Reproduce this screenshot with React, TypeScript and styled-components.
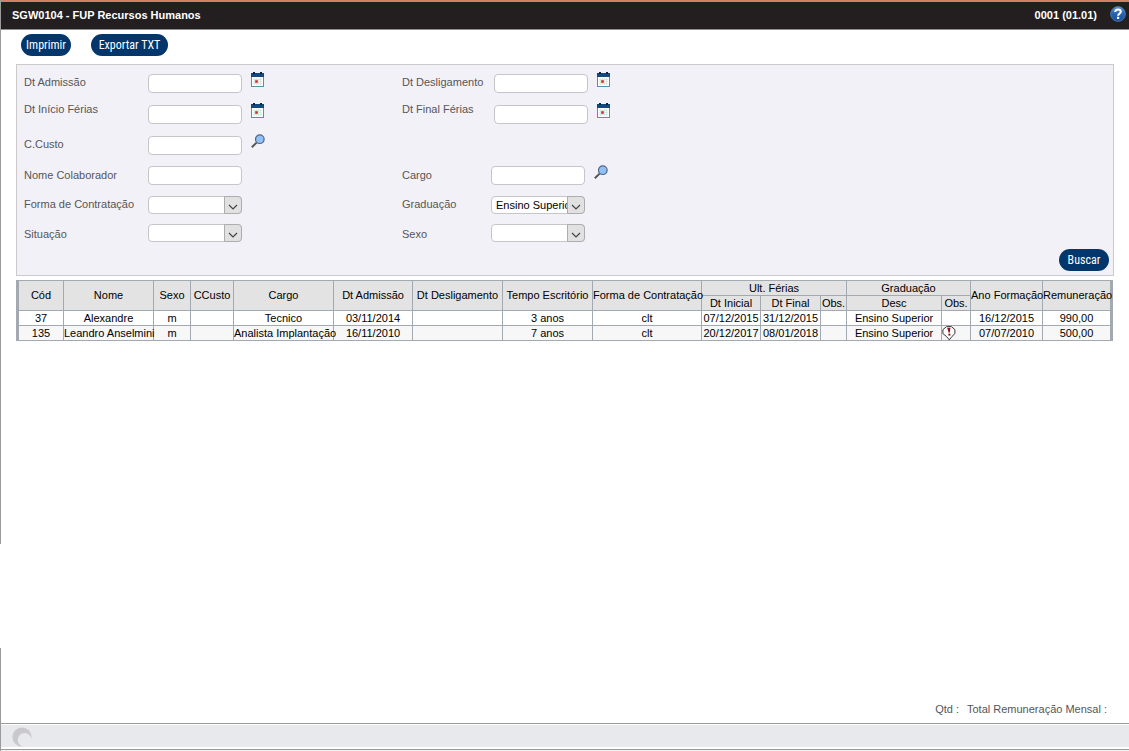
import React from 'react';
import styled, { createGlobalStyle } from 'styled-components';

const GlobalStyle = createGlobalStyle`
  *, *::before, *::after { box-sizing: border-box; }
  body {
    margin: 0;
    background: #ffffff;
    color: #565656;
    font: 11px/14px "Liberation Sans", Arial, sans-serif;
  }
`;

const edge = '#9b9b9b';
const gridLine = '#a3a9b0';
const navy = '#03366b';

const Page = styled.div`
  display: flex;
  flex-direction: column;
  min-height: 100vh;
`;

const Upper = styled.div`
  flex: 1 0 auto;
  border-left: 1px solid ${edge};
`;

const Break = styled.div`
  flex: none;
  height: 104px;
`;

const Lower = styled.div`
  flex: none;
  border-left: 1px solid ${edge};
`;

const TitleBar = styled.header`
  display: flex;
  align-items: center;
  height: 30px;
  padding: 0 3px 2px 11px;
  border-top: 2px solid #d67f62;
  border-bottom: 1px solid #8f8d8e;
  background: #231f20;
  color: #ffffff;
  font-weight: bold;
`;

const Title = styled.h1`
  flex: 1;
  margin: 0;
  font-size: 11px;
`;

const HelpButton = styled.button`
  display: flex;
  margin: 0 0 2px 13px;
  padding: 0;
  border: 0;
  background: none;
`;

const Toolbar = styled.div`
  display: flex;
  gap: 20px;
  padding: 4px 20px 8px;
`;

const Pill = styled.button<{ $wide?: boolean }>`
  width: ${(p) => (p.$wide ? 77 : 50)}px;
  height: 22px;
  padding: 0;
  border: 0;
  border-radius: 11px;
  background: ${navy};
  color: #ffffff;
  font: 12px/20px "Liberation Sans Narrow", "Arial Narrow", "Roboto Condensed", sans-serif;
  white-space: nowrap;
`;

const Panel = styled.form`
  margin: 0 15px 4px;
  padding: 3px 4px 4px 7px;
  border: 1px solid #cdc8ca;
  background: #f2f1f8;
`;

const Fields = styled.div`
  display: grid;
  grid-template-columns: 378px 1fr;
  grid-template-rows: 31px 31px 31px 29px 30px 26px;
`;

const FieldRow = styled.div<{ $column: number; $row: number }>`
  grid-column: ${(p) => p.$column};
  grid-row: ${(p) => p.$row};
  display: flex;
  align-items: center;
`;

const Label = styled.label<{ $width: number; $raised?: boolean }>`
  align-self: flex-start;
  width: ${(p) => p.$width}px;
  line-height: ${(p) => (p.$raised ? 20 : 28)}px;
`;

const TextBox = styled.input`
  width: 94px;
  height: 19px;
  padding: 0 4px;
  border: 1px solid #c6c6ca;
  border-radius: 4px;
  background: #ffffff;
  font: inherit;
`;

const SelectFrame = styled.span`
  position: relative;
  display: block;
  width: 94px;
  height: 18px;
`;

const Select = styled.select`
  width: 100%;
  height: 100%;
  padding: 0 17px 0 4px;
  border: 1px solid #c6c6ca;
  border-radius: 4px;
  background: #ffffff;
  color: #000000;
  font: inherit;
  appearance: none;
`;

const Arrow = styled.span`
  position: absolute;
  top: 0;
  right: 0;
  display: flex;
  align-items: center;
  justify-content: center;
  width: 18px;
  height: 18px;
  padding: 3px 1px 0 0;
  border: 1px solid #adadad;
  border-radius: 0 4px 4px 0;
  background: #e1e1e1;
  pointer-events: none;
`;

const IconButton = styled.button`
  align-self: flex-start;
  display: flex;
  margin: 4px 0 0 9px;
  padding: 0;
  border: 0;
  background: none;
`;

const PanelActions = styled.div`
  display: flex;
  justify-content: flex-end;
  padding-top: 3px;
`;

const TableFrame = styled.div`
  margin: 0 16px 0 15px;
  border: solid ${gridLine};
  border-width: 1px 3px 0 3px;
`;

const Table = styled.table`
  width: 100%;
  table-layout: fixed;
  border-collapse: separate;
  border-spacing: 0;
  color: #000000;
  text-align: center;
  white-space: nowrap;
`;

const Col = styled.col<{ $width: number }>`
  width: ${(p) => p.$width}px;
`;

const Head = styled.th<{ $last?: boolean; $tall?: boolean }>`
  height: 15px;
  padding: 0 0 ${(p) => (p.$tall ? 2 : 0)}px;
  border: solid ${gridLine};
  border-width: 0 ${(p) => (p.$last ? 0 : 1)}px 1px 0;
  background: #e3e3e3;
  font-weight: normal;
`;

const BodyRow = styled.tr`
  background: #ffffff;
  &:nth-child(even) { background: #f7f7f7; }
`;

const Cell = styled.td`
  height: 15px;
  padding: 0;
  border: solid ${gridLine};
  border-width: 0 1px 1px 0;
  &:last-child { border-right-width: 0; }
`;

const NoteButton = styled.button`
  display: block;
  height: 14px;
  padding: 0;
  border: 0;
  background: none;
`;

const Totals = styled.div`
  display: flex;
  justify-content: flex-end;
  gap: 8px;
  padding: 54px 22px 7px;
`;

const StatusBar = styled.footer`
  display: flex;
  align-items: center;
  height: 27px;
  padding-left: 11px;
  border: solid ${edge};
  border-width: 1px 0;
  background: #e8e9ed;
  box-shadow: inset 0 1px #ffffff, inset 0 -2px #ffffff;
`;

const BottomGap = styled.div`
  height: 1px;
  background: #f0f0f0;
`;

const Calendar = () => (
  <svg width="14" height="16" viewBox="0 0 14 16" aria-hidden="true">
    <rect x="0.5" y="2.5" width="12" height="12" fill="#fff" stroke="#5b8fb0" />
    <rect x="0" y="1" width="13" height="4" fill="#11487f" />
    <rect x="2" y="0" width="2" height="2" fill="#0b2340" />
    <rect x="9" y="0" width="2" height="2" fill="#0b2340" />
    <path d="M2 7.5h9M2 9.5h9M2 11.5h9M3.5 6v7M5.5 6v7M7.5 6v7M9.5 6v7" stroke="#d5e4e0" strokeWidth="0.8" />
    <rect x="4" y="8" width="3" height="3" fill="#e08a84" />
    <rect x="4.5" y="8.5" width="2" height="2" fill="#d02a26" />
  </svg>
);

const Magnifier = () => (
  <svg width="15" height="15" viewBox="0 0 15 15" aria-hidden="true">
    <path d="M0.8 13.2L5.6 8.6" stroke="#555" strokeWidth="2" />
    <circle cx="8.8" cy="5.2" r="4.3" fill="#8fc0fa" stroke="#54657c" strokeWidth="1.2" />
  </svg>
);

const HelpIcon = () => (
  <svg width="16" height="16" viewBox="0 0 16 16" aria-hidden="true">
    <defs>
      <linearGradient id="help-fill" x1="0" y1="0" x2="0" y2="1">
        <stop offset="0" stopColor="#5f93cd" />
        <stop offset="0.5" stopColor="#2563b0" />
        <stop offset="1" stopColor="#1c4f98" />
      </linearGradient>
    </defs>
    <circle cx="8" cy="8" r="7.4" fill="url(#help-fill)" stroke="#4d7db5" strokeWidth="0.8" />
    <path d="M5.2 6C5.4 4.3 6.5 3.6 8 3.6c1.7 0 2.8.8 2.8 2.2C10.8 7.6 8.1 7.6 8.1 9.7" fill="none" stroke="#fff" strokeWidth="2" />
    <rect x="7" y="10.8" width="2.2" height="2.2" fill="#fff" />
  </svg>
);

const NoteIcon = () => (
  <svg width="14" height="15" viewBox="0 0 14 15" aria-hidden="true">
    <path d="M4.6 0.6h4.8L12.9 3.6v4L10 10.4 7.3 13.9 4.4 10.4 0.9 7.6v-4z" fill="#fff" stroke="#3a3434" strokeWidth="1" />
    <path d="M5.2 1.8h3.2L7.8 6.6H6.6z" fill="#8e1226" />
    <rect x="6.4" y="7.6" width="2" height="2" fill="#8e1226" />
  </svg>
);

const Logo = () => (
  <svg width="20" height="20" viewBox="0 0 20 20" aria-hidden="true">
    <circle cx="10" cy="10" r="9.6" fill="#c9c9cb" />
    <circle cx="12.6" cy="12.8" r="6.9" fill="#e8e9ed" />
    <path d="M19.9 12.4a10 10 0 0 1-8 7.6" fill="none" stroke="#e8e9ed" strokeWidth="2.6" />
  </svg>
);

interface FieldProps {
  id: string;
  label: string;
  column: 1 | 2;
  row: number;
  kind: 'date' | 'lookup' | 'text' | 'select';
  options?: string[];
  raised?: boolean;
}

const Field = ({ id, label, column, row, kind, options = [''], raised }: FieldProps) => {
  const labelWidth = column === 1 ? 124 : kind === 'date' ? 92 : 89;
  return (
    <FieldRow $column={column} $row={row}>
      <Label htmlFor={id} $width={labelWidth} $raised={raised}>{label}</Label>
      {kind === 'select' ? (
        <SelectFrame>
          <Select id={id}>
            {options.map((option) => <option key={option}>{option}</option>)}
          </Select>
          <Arrow>
            <svg width="10" height="6" viewBox="0 0 10 6" aria-hidden="true">
              <path d="M1 1l4 4 4-4" fill="none" stroke="#444" strokeWidth="1.2" />
            </svg>
          </Arrow>
        </SelectFrame>
      ) : (
        <TextBox id={id} type="text" />
      )}
      {kind === 'date' && <IconButton type="button" aria-label={`Calendário ${label}`}><Calendar /></IconButton>}
      {kind === 'lookup' && <IconButton type="button" aria-label={`Pesquisar ${label}`}><Magnifier /></IconButton>}
    </FieldRow>
  );
};

const fields: FieldProps[] = [
  { id: 'admissao', label: 'Dt Admissão', column: 1, row: 1, kind: 'date' },
  { id: 'desligamento', label: 'Dt Desligamento', column: 2, row: 1, kind: 'date' },
  { id: 'inicio', label: 'Dt Início Férias', column: 1, row: 2, kind: 'date', raised: true },
  { id: 'final', label: 'Dt Final Férias', column: 2, row: 2, kind: 'date', raised: true },
  { id: 'ccusto', label: 'C.Custo', column: 1, row: 3, kind: 'lookup' },
  { id: 'nome', label: 'Nome Colaborador', column: 1, row: 4, kind: 'text' },
  { id: 'cargo', label: 'Cargo', column: 2, row: 4, kind: 'lookup' },
  { id: 'forma', label: 'Forma de Contratação', column: 1, row: 5, kind: 'select' },
  { id: 'graduacao', label: 'Graduação', column: 2, row: 5, kind: 'select', options: ['Ensino Superior'] },
  { id: 'situacao', label: 'Situação', column: 1, row: 6, kind: 'select' },
  { id: 'sexo', label: 'Sexo', column: 2, row: 6, kind: 'select' },
];

const columnWidths = [45, 90, 37, 43, 100, 79, 90, 90, 109, 59, 60, 26, 95, 29, 72, 67];

const leadingHeads = [
  'Cód', 'Nome', 'Sexo', 'CCusto', 'Cargo', 'Dt Admissão',
  'Dt Desligamento', 'Tempo Escritório', 'Forma de Contratação',
];

const subHeads = ['Dt Inicial', 'Dt Final', 'Obs.', 'Desc', 'Obs.'];

const NOTE = '!';

const rows = [
  ['37', 'Alexandre', 'm', '', 'Tecnico', '03/11/2014', '', '3 anos', 'clt', '07/12/2015', '31/12/2015', '', 'Ensino Superior', '', '16/12/2015', '990,00'],
  ['135', 'Leandro Anselmini', 'm', '', 'Analista Implantação', '16/11/2010', '', '7 anos', 'clt', '20/12/2017', '08/01/2018', '', 'Ensino Superior', NOTE, '07/07/2010', '500,00'],
];

export default function App() {
  return (
    <Page>
      <GlobalStyle />
      <Upper>
        <TitleBar>
          <Title>SGW0104 - FUP Recursos Humanos</Title>
          <span>0001 (01.01)</span>
          <HelpButton type="button" aria-label="Ajuda"><HelpIcon /></HelpButton>
        </TitleBar>
        <Toolbar>
          <Pill type="button">Imprimir</Pill>
          <Pill type="button" $wide>Exportar TXT</Pill>
        </Toolbar>
        <Panel onSubmit={(event) => event.preventDefault()}>
          <Fields>
            {fields.map((field) => <Field key={field.id} {...field} />)}
          </Fields>
          <PanelActions>
            <Pill type="submit">Buscar</Pill>
          </PanelActions>
        </Panel>
        <TableFrame>
          <Table>
            <colgroup>
              {columnWidths.map((width, index) => <Col key={index} $width={width} />)}
            </colgroup>
            <thead>
              <tr>
                {leadingHeads.map((head) => <Head key={head} rowSpan={2} $tall>{head}</Head>)}
                <Head colSpan={3}>Ult. Férias</Head>
                <Head colSpan={2}>Graduação</Head>
                <Head rowSpan={2} $tall>Ano Formação</Head>
                <Head rowSpan={2} $tall $last>Remuneração</Head>
              </tr>
              <tr>
                {subHeads.map((head, index) => <Head key={index}>{head}</Head>)}
              </tr>
            </thead>
            <tbody>
              {rows.map((row) => (
                <BodyRow key={row[0]}>
                  {row.map((value, index) => (
                    <Cell key={index}>
                      {value === NOTE ? (
                        <NoteButton type="button" aria-label="Observação"><NoteIcon /></NoteButton>
                      ) : value}
                    </Cell>
                  ))}
                </BodyRow>
              ))}
            </tbody>
          </Table>
        </TableFrame>
      </Upper>
      <Break />
      <Lower>
        <Totals>
          <span>Qtd :</span>
          <span>Total Remuneração Mensal :</span>
        </Totals>
        <StatusBar><Logo /></StatusBar>
        <BottomGap />
      </Lower>
    </Page>
  );
}
